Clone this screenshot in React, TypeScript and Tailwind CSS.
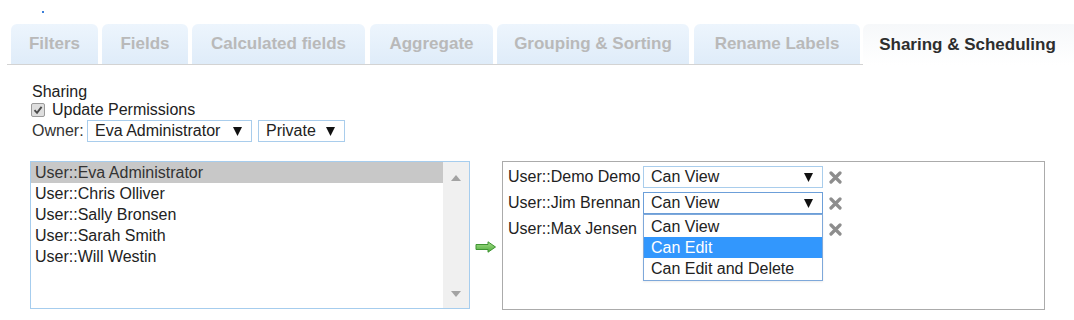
import React from 'react'

const tabs = [
  { label: 'Filters', w: 'w-[87px]', ml: 'ml-0' },
  { label: 'Fields', w: 'w-[86px]', ml: 'ml-[4px]' },
  { label: 'Calculated fields', w: 'w-[173px]', ml: 'ml-[4px]' },
  { label: 'Aggregate', w: 'w-[123px]', ml: 'ml-[5px]' },
  { label: 'Grouping & Sorting', w: 'w-[192px]', ml: 'ml-[4px]' },
  { label: 'Rename Labels', w: 'w-[166px]', ml: 'ml-[5px]' },
]

const users = [
  'User::Eva Administrator',
  'User::Chris Olliver',
  'User::Sally Bronsen',
  'User::Sarah Smith',
  'User::Will Westin',
]

const shared = ['User::Demo Demo', 'User::Jim Brennan', 'User::Max Jensen']

function Caret() {
  return (
    <svg width="9" height="9" viewBox="0 0 9 9" className="shrink-0">
      <polygon points="0,0 9,0 4.5,9" fill="#111" />
    </svg>
  )
}

function SelectBox({ value, className }: { value: string; className: string }) {
  return (
    <div className={`flex items-center justify-between h-[22px] bg-white pl-[7px] pr-[9px] ${className}`}>
      <span className="leading-[20px]">{value}</span>
      <Caret />
    </div>
  )
}

function RemoveIcon() {
  return (
    <svg width="13" height="13" viewBox="0 0 13 13">
      <path d="M2 2 L11 11 M11 2 L2 11" stroke="#8d8d8d" strokeWidth="3.2" strokeLinecap="round" />
    </svg>
  )
}

export default function App() {
  return (
    <div className="w-[1074px] h-[320px] overflow-hidden bg-white text-[#222] font-['Liberation_Sans',Arial,sans-serif] text-[16px]">
      {/* little marker */}
      <div className="h-[24px] pl-[42px] pt-[11px]">
        <div className="w-[2px] h-[2px] bg-[#3b7fd9]" />
      </div>

      {/* Tabs */}
      <div className="ml-[7px] pl-[4px] flex items-end border-b border-[#d3d3d3] h-[41px]">
        {tabs.map(t => (
          <div
            key={t.label}
            className={`${t.w} ${t.ml} shrink-0 h-[40px] flex items-center justify-center rounded-t-[6px] bg-gradient-to-b from-[#edf5fd] to-[#dfecf9] text-[17px] font-bold text-[#b9b9b9]`}
          >
            {t.label}
          </div>
        ))}
        <div className="w-[215px] ml-[3px] shrink-0 h-[41px] -mb-px flex items-center justify-center pr-[6px] rounded-t-[6px] bg-gradient-to-b from-[#f6f8fa] to-white text-[17px] font-bold text-[#2e2e2e]">
          Sharing &amp; Scheduling
        </div>
      </div>

      {/* Sharing form */}
      <div className="pl-[32px] pt-[18px] leading-[18px]">
        <div>Sharing</div>
        <div className="flex items-center gap-[7px] -ml-[1px]">
          <span className="w-[14px] h-[14px] rounded-[2px] border border-[#9a9a9a] bg-[#dedede] flex items-center justify-center">
            <svg width="10" height="10" viewBox="0 0 10 10">
              <path d="M1.5 5.2 L4 7.8 L8.6 1.8" stroke="#4a4a4a" strokeWidth="1.9" fill="none" />
            </svg>
          </span>
          <span>Update Permissions</span>
        </div>
        <div className="flex items-center mt-[1px]">
          <span className="w-[55px] text-[#333]">Owner:</span>
          <SelectBox value="Eva Administrator" className="w-[165px] border border-[#a9cdec]" />
          <SelectBox value="Private" className="w-[87px] ml-[6px] border border-[#a9cdec]" />
        </div>
      </div>

      <div className="flex items-start pl-[30px] mt-[19px]">
        {/* available users */}
        <div className="w-[440px] h-[148px] border border-[#a6cdee] flex bg-white">
          <div className="flex-1 flex flex-col">
            {users.map((u, i) => (
              <div key={u} className={`h-[21px] leading-[21px] pl-[4px] ${i === 0 ? 'bg-[#c8c8c8] text-[#333]' : ''}`}>
                {u}
              </div>
            ))}
          </div>
          <div className="w-[26px] bg-[#f0f0f0] flex flex-col items-center justify-between pt-[13px] pb-[11px]">
            <svg width="10" height="6" viewBox="0 0 10 6">
              <polygon points="0,6 10,6 5,0" fill="#a3a3a3" />
            </svg>
            <svg width="10" height="6" viewBox="0 0 10 6">
              <polygon points="0,0 10,0 5,6" fill="#a3a3a3" />
            </svg>
          </div>
        </div>

        {/* move arrow */}
        <div className="w-[32px] pl-[5px] pt-[80px]">
          <svg width="22" height="12" viewBox="0 0 22 12">
            <defs>
              <linearGradient id="ga" x1="0" y1="0" x2="0" y2="1">
                <stop offset="0" stopColor="#a5dc8a" />
                <stop offset="1" stopColor="#4fae3c" />
              </linearGradient>
            </defs>
            <path d="M1 3.5 H13 V0.8 L20.5 6 L13 11.2 V8.5 H1 Z" fill="url(#ga)" stroke="#3f9432" strokeWidth="1" />
          </svg>
        </div>

        {/* shared users */}
        <div className="w-[543px] h-[149px] border border-[#ababab] bg-white pl-[5px] pt-[4px]">
          <div className="relative flex flex-col gap-[4px]">
            {shared.map((s, i) => (
              <div key={s} className="flex items-center h-[22px]">
                <span className="w-[135px] whitespace-nowrap">{s}</span>
                <SelectBox
                  value="Can View"
                  className={`w-[180px] border ${i === 1 ? 'border-[#6c9fd9]' : 'border-[#a9cdec]'}`}
                />
                <span className="ml-[6px] flex items-center">
                  <RemoveIcon />
                </span>
              </div>
            ))}

            {/* open options list */}
            <div className="absolute left-[135px] top-[48px] w-[180px] border border-[#7ea8da] bg-white py-[1px] shadow-[0_1px_2px_rgba(0,0,0,0.08)]">
              <div className="h-[21px] leading-[21px] pl-[7px]">Can View</div>
              <div className="h-[21px] leading-[21px] pl-[7px] bg-[#3297fd] text-white">Can Edit</div>
              <div className="h-[21px] leading-[21px] pl-[7px]">Can Edit and Delete</div>
            </div>
          </div>
        </div>
      </div>
    </div>
  )
}
